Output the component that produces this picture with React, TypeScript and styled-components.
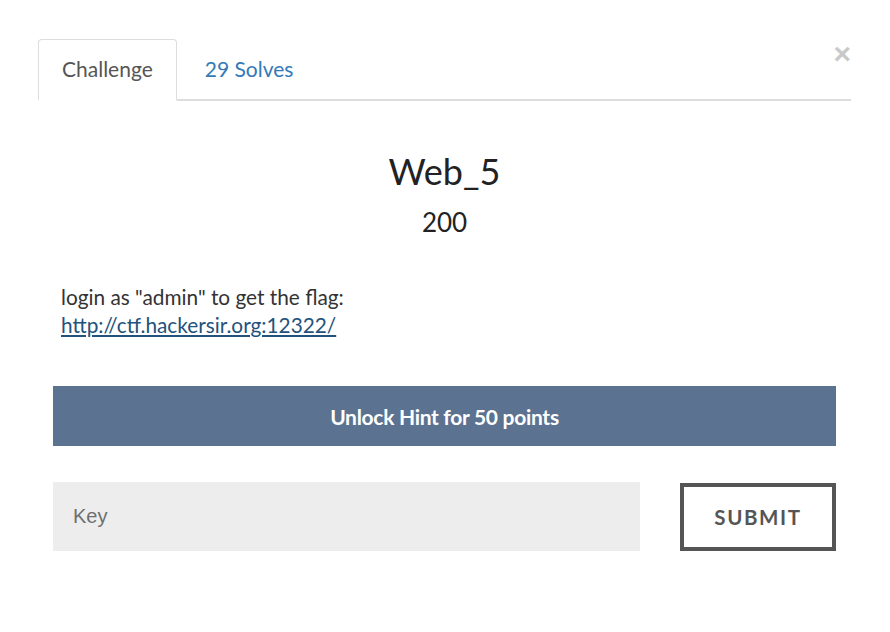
import React from "react";
import styled, { createGlobalStyle } from "styled-components";

const Global = createGlobalStyle`
  html, body { margin: 0; padding: 0; background: #fff; }
  body { font-family: Lato, "Open Sans", sans-serif; color: #333; }
  * { box-sizing: border-box; }
`;

const Modal = styled.div`
  position: relative;
  width: 813px;
  margin: 39px 0 0 38px;
`;

const Close = styled.button`
  position: absolute;
  top: 1px;
  right: 0px;
  border: 0;
  background: none;
  padding: 0;
  font-family: "Liberation Sans", Arial, sans-serif;
  font-size: 30px;
  font-weight: 700;
  line-height: 28px;
  color: #c9c9c9;
  cursor: pointer;
`;

const Tabs = styled.div`
  display: flex;
  border-bottom: 2px solid #ddd;
`;

const Tab = styled.div<{ $active?: boolean }>`
  height: 62px;
  padding: 0 23px 2px;
  margin-bottom: -2px;
  display: flex;
  align-items: center;
  font-size: 21px;
  border: 1px solid ${(p) => (p.$active ? "#ddd" : "transparent")};
  border-bottom: 2px solid ${(p) => (p.$active ? "#fff" : "transparent")};
  border-radius: 4px 4px 0 0;
  color: ${(p) => (p.$active ? "#555" : "#337ab7")};
  background: ${(p) => (p.$active ? "#fff" : "transparent")};
  margin-right: 4px;
`;

const Body = styled.div`
  padding: 48px 15px 0 15px;
`;

const Title = styled.h2`
  margin: 0;
  text-align: center;
  font-size: 36px;
  font-weight: 400;
  line-height: 44px;
  color: #222;
`;

const Value = styled.h4`
  margin: 14px 0 0;
  text-align: center;
  font-size: 26px;
  font-weight: 400;
  line-height: 30px;
  color: #222;
`;

const Description = styled.div`
  margin-top: 46px;
  padding-left: 8px;
  font-size: 20.8px;
  line-height: 28px;
  color: #333;
  a { color: #23527c; text-decoration: underline; }
`;

const HintButton = styled.button`
  display: block;
  width: 100%;
  height: 60px;
  margin-top: 47px;
  border: 0;
  background: #5b7290;
  color: #fff;
  font-family: Lato, sans-serif;
  font-weight: 700;
  font-size: 21px;
  letter-spacing: -0.3px;
`;

const SubmitRow = styled.div`
  display: flex;
  justify-content: space-between;
  align-items: flex-start;
  margin-top: 36px;
`;

const KeyInput = styled.input`
  width: 587px;
  height: 69px;
  border: 0;
  background: #ededed;
  padding: 0 20px;
  font-family: "Liberation Sans", Arial, sans-serif;
  font-size: 20px;
  color: #555;
  outline: none;
  &::placeholder { color: #6f6f6f; }
`;

const Submit = styled.button`
  width: 156px;
  height: 68px;
  margin-top: 1px;
  border: 4px solid #555;
  background: #fff;
  color: #555;
  font-family: Lato, sans-serif;
  font-weight: 700;
  font-size: 20.5px;
  letter-spacing: 1.6px;
`;

export default function App() {
  return (
    <>
      <Global />
      <Modal>
        <Close aria-label="Close">×</Close>
        <Tabs>
          <Tab $active>Challenge</Tab>
          <Tab>29 Solves</Tab>
        </Tabs>
        <Body>
          <Title>Web_5</Title>
          <Value>200</Value>
          <Description>
            login as "admin" to get the flag:
            <br />
            <a href="#">http://ctf.hackersir.org:12322/</a>
          </Description>
          <HintButton>Unlock Hint for 50 points</HintButton>
          <SubmitRow>
            <KeyInput placeholder="Key" />
            <Submit>SUBMIT</Submit>
          </SubmitRow>
        </Body>
      </Modal>
    </>
  );
}
